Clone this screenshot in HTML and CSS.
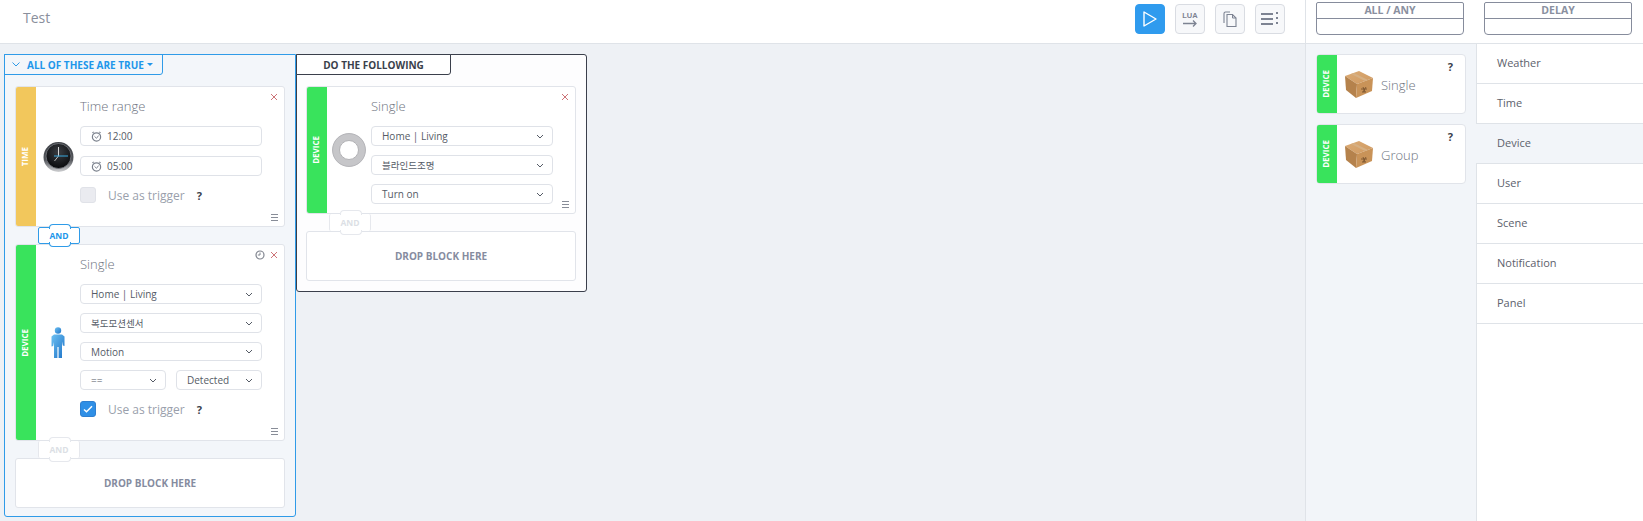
FILE: index.html
```html
<!DOCTYPE html>
<html lang="en">
<head>
<meta charset="UTF-8">
<title>Test</title>
<link rel="stylesheet" href="styles.css">
</head>
<body>

<!-- shared icons -->
<svg class="defs" width="0" height="0">
    <defs>
        <linearGradient id="personFill" x1="0" y1="0" x2="1" y2="1">
            <stop offset="0" stop-color="#6cc0f2"/>
            <stop offset="1" stop-color="#1f74c8"/>
        </linearGradient>
        <linearGradient id="boxTop" x1="0" y1="0" x2="1" y2="1">
            <stop offset="0" stop-color="#dcab74"/>
            <stop offset="1" stop-color="#cf9a62"/>
        </linearGradient>
        <radialGradient id="clockFace" cx="0.5" cy="0.35" r="0.7">
            <stop offset="0" stop-color="#3a3d42"/>
            <stop offset="1" stop-color="#050608"/>
        </radialGradient>
        <linearGradient id="clockRim" x1="0" y1="0" x2="0" y2="1">
            <stop offset="0" stop-color="#3c3f44"/>
            <stop offset="0.6" stop-color="#55585d"/>
            <stop offset="1" stop-color="#d2d3d5"/>
        </linearGradient>
    </defs>
    <symbol id="chev" viewBox="0 0 8 5"><path d="M1 1l3 3 3-3" fill="none" stroke="#555b66" stroke-width="1"/></symbol>
    <symbol id="alarm" viewBox="0 0 12 12">
        <circle cx="6" cy="6.500" r="4.500" fill="none" stroke="#7a808c" stroke-width="1.300"/>
        <path d="M3.800 5.800L6 8l2.200-3" fill="none" stroke="#7a808c" stroke-width="1"/>
        <path d="M1.500 2l1.500-1M10.500 2L9 1" stroke="#7a808c" stroke-width="1.200"/>
    </symbol>
    <symbol id="history" viewBox="0 0 10 10">
        <circle cx="5" cy="5" r="4" fill="none" stroke="#80858f" stroke-width="1.200"/>
        <path d="M5 2.500V5H2.800" fill="none" stroke="#80858f" stroke-width="1"/>
    </symbol>
    <symbol id="close" viewBox="0 0 8 8"><path d="M1 1l6 6M7 1l-6 6" stroke="#cd7478" stroke-width="1"/></symbol>
    <symbol id="lines" viewBox="0 0 7 7"><path d="M0 .5h7M0 3.500h7M0 6.500h7" stroke="#7a808c" stroke-width=".9"/></symbol>
    <symbol id="box" viewBox="0 0 28 27">
        <path d="M0 5L14 0l14 7-16 6z" fill="url(#boxTop)"/>
        <path d="M0 5l12 8-1 14-10-8z" fill="#b5824c"/>
        <path d="M12 13l16-6-1 13-16 7z" fill="#c99358"/>
        <path d="M6 3l14 7 3-1L9 2z" fill="#d6b083"/>
        <path d="M16 18h6M18 16l2 5M21 16l-3 5M17 21h4" stroke="#7a5530" stroke-width=".9" fill="none"/>
    </symbol>
</svg>

<header class="topbar">
    <div class="page-title">Test</div>
    <div class="tools">
        <button class="tool tool-on">
            <svg width="16" height="18" viewBox="0 0 16 18"><path d="M2 2l12 7-12 7z" fill="none" stroke="#fff" stroke-width="1.400" stroke-linejoin="round"/></svg>
        </button>
        <button class="tool">
            <span class="lua">LUA</span>
            <svg width="14" height="7" viewBox="0 0 14 7"><path d="M0 3.500h13M10 .5l3 3-3 3" fill="none" stroke="#7d8392" stroke-width="1.300"/></svg>
        </button>
        <button class="tool">
            <svg width="16" height="18" viewBox="0 0 16 18"><path d="M2 13V3.500A1.500 1.500 0 0 1 3.500 2H8" fill="none" stroke="#7d8392" stroke-width="1.100"/><path d="M5 4.500h5.500l3.500 3.500v8.500H5z" fill="none" stroke="#7d8392" stroke-width="1.100"/><path d="M10.500 4.500V8H14" fill="none" stroke="#7d8392" stroke-width="1"/></svg>
        </button>
        <button class="tool">
            <svg width="18" height="14" viewBox="0 0 18 14"><path d="M0 2h12M0 7h12M0 12h12" stroke="#7d8392" stroke-width="1.800"/><path d="M15 1h2M15 6h2M15 11h2" stroke="#7d8392" stroke-width="2"/></svg>
        </button>
    </div>
    <div class="drag-heads">
        <div class="drag-head"><div class="drag-name">ALL / ANY</div><div class="drag-slot"></div></div>
        <div class="drag-head"><div class="drag-name">DELAY</div><div class="drag-slot"></div></div>
    </div>
</header>

<div class="workspace">
    <main class="canvas">

        <!-- conditions -->
        <section class="group group-if">
            <div class="group-head">
                <svg class="head-chev" width="8" height="5" viewBox="0 0 8 5"><path d="M.5.5L4 4 7.500.5" fill="none" stroke="#2f9be8" stroke-width="1"/></svg>
                ALL OF THESE ARE TRUE<span class="caret"></span>
            </div>
            <div class="group-body">
                <div class="card card-tall">
                    <div class="strip strip-time"><span>TIME</span></div>
                    <div class="card-icon">
                        <svg width="31" height="32" viewBox="0 0 31 32">
                            <circle cx="15.500" cy="16" r="15" fill="url(#clockRim)"/>
                            <circle cx="15.500" cy="15" r="12.500" fill="url(#clockFace)" stroke="#777a80" stroke-width=".8"/>
                            <path d="M15.500 15V6" stroke="#fff" stroke-width=".8"/>
                            <path d="M15.500 15l-4 5" stroke="#ddd" stroke-width=".8"/>
                            <path d="M11 15h14" stroke="#38a8de" stroke-width="1"/>
                        </svg>
                    </div>
                    <div class="card-main">
                        <div class="card-title">Time range</div>
                        <div class="field field-time"><svg width="11" height="11"><use href="#alarm"/></svg>12:00</div>
                        <div class="field field-time"><svg width="11" height="11"><use href="#alarm"/></svg>05:00</div>
                        <div class="trigger">
                            <span class="check"></span>
                            <span class="trigger-text">Use as trigger</span>
                            <span class="help">?</span>
                        </div>
                    </div>
                    <svg class="card-close" width="8" height="8"><use href="#close"/></svg>
                    <svg class="card-menu" width="7" height="7"><use href="#lines"/></svg>
                </div>

                <div class="joint"><span>AND</span></div>

                <div class="card card-tall">
                    <div class="strip strip-device"><span>DEVICE</span></div>
                    <div class="card-icon">
                        <svg width="14" height="31" viewBox="0 0 14 31">
                            <circle cx="7" cy="3.500" r="3.200" fill="url(#personFill)"/>
                            <path d="M3 7.500h8l2.500 2v9.500l-1.700-.5-.8-4V31H7.600V20H6.400v11H3V15l-.8 4-1.700.5v-10z" fill="url(#personFill)"/>
                        </svg>
                    </div>
                    <div class="card-main card-main-tight">
                        <div class="card-title">Single</div>
                        <div class="field">Home | Living<svg class="chev" width="8" height="5"><use href="#chev"/></svg></div>
                        <div class="field field-cjk">복도모션센서<svg class="chev" width="8" height="5"><use href="#chev"/></svg></div>
                        <div class="field field-short">Motion<svg class="chev" width="8" height="5"><use href="#chev"/></svg></div>
                        <div class="field-row">
                            <div class="field">==<svg class="chev" width="8" height="5"><use href="#chev"/></svg></div>
                            <div class="field">Detected<svg class="chev" width="8" height="5"><use href="#chev"/></svg></div>
                        </div>
                        <div class="trigger">
                            <span class="check check-on">
                                <svg width="10" height="8" viewBox="0 0 10 8"><path d="M1 4.500l2.500 2.200L9 1.200" fill="none" stroke="#fff" stroke-width="1.500"/></svg>
                            </span>
                            <span class="trigger-text">Use as trigger</span>
                            <span class="help">?</span>
                        </div>
                    </div>
                    <svg class="card-history" width="10" height="10"><use href="#history"/></svg>
                    <svg class="card-close" width="8" height="8"><use href="#close"/></svg>
                    <svg class="card-menu" width="7" height="7"><use href="#lines"/></svg>
                </div>

                <div class="joint joint-ghost"><span>AND</span></div>
                <div class="drop">DROP BLOCK HERE</div>
            </div>
        </section>

        <!-- actions -->
        <section class="group group-then">
            <div class="group-head">DO THE FOLLOWING</div>
            <div class="group-body">
                <div class="card">
                    <div class="strip strip-device"><span>DEVICE</span></div>
                    <div class="card-icon">
                        <svg width="34" height="34" viewBox="0 0 34 34">
                            <circle cx="17" cy="17" r="16.500" fill="#c6c6c9" stroke="#aaaaae" stroke-width=".8"/>
                            <circle cx="17" cy="17" r="9.500" fill="#fff" stroke="#b2b2b5"/>
                        </svg>
                    </div>
                    <div class="card-main card-main-tight card-main-short">
                        <div class="card-title">Single</div>
                        <div class="field">Home | Living<svg class="chev" width="8" height="5"><use href="#chev"/></svg></div>
                        <div class="field field-cjk">블라인드조명<svg class="chev" width="8" height="5"><use href="#chev"/></svg></div>
                        <div class="field">Turn on<svg class="chev" width="8" height="5"><use href="#chev"/></svg></div>
                    </div>
                    <svg class="card-close" width="8" height="8"><use href="#close"/></svg>
                    <svg class="card-menu" width="7" height="7"><use href="#lines"/></svg>
                </div>
                <div class="joint joint-ghost"><span>AND</span></div>
                <div class="drop">DROP BLOCK HERE</div>
            </div>
        </section>
    </main>

    <aside class="palette">
        <div class="block">
            <div class="strip strip-device"><span>DEVICE</span></div>
            <svg class="block-icon" width="28" height="27"><use href="#box"/></svg>
            <span class="card-title">Single</span>
            <span class="help block-help">?</span>
        </div>
        <div class="block">
            <div class="strip strip-device"><span>DEVICE</span></div>
            <svg class="block-icon" width="28" height="27"><use href="#box"/></svg>
            <span class="card-title">Group</span>
            <span class="help block-help">?</span>
        </div>
    </aside>

    <nav class="cats">
        <div class="cat">Weather</div>
        <div class="cat">Time</div>
        <div class="cat cat-active">Device</div>
        <div class="cat">User</div>
        <div class="cat">Scene</div>
        <div class="cat">Notification</div>
        <div class="cat">Panel</div>
    </nav>
</div>

</body>
</html>
```

FILE: styles.css
```css
* {
    box-sizing: border-box;
}

html, body {
    height: 100%;
}

body {
    margin: 0;
    display: flex;
    flex-direction: column;
    overflow: hidden;
    font-family: "Open Sans", "Noto Sans CJK KR", sans-serif;
    color: #555b66;
    background: #eef1f5;
}

/* kept in the page (not display:none) so the gradients still resolve */
.defs {
    position: absolute;
    width: 0;
    height: 0;
}

/* Top bar */
.topbar {
    display: flex;
    height: 44px;
    flex: none;
    background: #fff;
    border-bottom: 1px solid #dfe3e8;
}

.page-title {
    flex: 1;
    padding: 8px 0 0 23px;
    font-size: 14px;
    line-height: 20px;
    color: #8a8f9c;
}

.tools {
    display: flex;
    gap: 10px;
    padding-top: 4px;
    margin-right: 20px;
}

.tool {
    width: 30px;
    height: 30px;
    padding: 0;
    display: flex;
    flex-direction: column;
    align-items: center;
    justify-content: center;
    background: #f7f8fa;
    border: 1px solid #d9dce2;
    border-radius: 4px;
}

.tool-on {
    background: #2f9bee;
    border-color: #2f9bee;
}

.lua {
    font-size: 7.500px;
    font-weight: 700;
    line-height: 9px;
    color: #7d8392;
}

.drag-heads {
    width: 338px;
    display: flex;
    gap: 20px;
    padding: 2px 0 0 10px;
    border-left: 1px solid #dfe3e8;
}

.drag-head {
    width: 148px;
    height: 33px;
    border: 1px solid #868c9c;
    border-radius: 2px 2px 4px 4px;
}

.drag-name {
    height: 16px;
    border-bottom: 1px solid #868c9c;
    font-size: 10.500px;
    font-weight: 700;
    line-height: 15px;
    text-align: center;
    color: #8a90a0;
}

/* Main areas */
.workspace {
    flex: 1;
    display: flex;
    min-height: 0;
}

.canvas {
    width: 1305px;
    display: flex;
    align-items: flex-start;
    padding: 10px 0 0 4px;
}

.palette {
    width: 171px;
    padding: 10px 10px 0 10px;
    background: #f2f5f9;
    border-left: 1px solid #dfe3e8;
}

.cats {
    flex: 1;
    background: #fff;
    border-left: 1px solid #dfe3e8;
}

/* Groups */
.group {
    border: 1px solid #2f9be8;
    border-radius: 0 0 3px 3px;
    background: #f3f6fa;
}

.group-if {
    width: 292px;
    height: 463px;
}

.group-then {
    width: 291px;
    height: 238px;
    background: #fdfdfe;
    border-color: #3a3f4b;
    border-radius: 0 3px 3px 3px;
}

.group-head {
    width: 159px;
    height: 21px;
    margin: -1px 0 0 -1px;
    padding-left: 7px;
    display: flex;
    align-items: center;
    border: 1px solid #2f9be8;
    border-radius: 0 0 3px 0;
    font-size: 10px;
    font-weight: 700;
    color: #2196ea;
}

.group-then .group-head {
    width: 155px;
    padding-left: 0;
    justify-content: center;
    background: #fff;
    border-color: #3a3f4b;
    color: #3a3f4b;
}

.head-chev {
    margin-right: 7px;
}

.caret {
    margin-left: 3px;
    border: 3px solid transparent;
    border-top-color: #2196ea;
    border-bottom: 0;
}

.group-body {
    padding: 11px 10px 0;
}

.group-then .group-body {
    padding-left: 9px;
}

/* Blocks */
.card {
    position: relative;
    display: flex;
    background: #fff;
    border: 1px solid #e1e4ea;
    border-radius: 3px;
}

.strip {
    width: 20px;
    flex: none;
    display: flex;
    align-items: center;
    justify-content: center;
    padding-right: 4px;
    border-radius: 2px 0 0 2px;
}

.strip span {
    writing-mode: vertical-rl;
    transform: rotate(180deg);
    font-size: 8px;
    font-weight: 700;
    color: #fff;
}

.strip-time {
    background: #f2c75c;
}

.strip-device {
    background: #39e35c;
}

.card-icon {
    width: 44px;
    flex: none;
    display: flex;
    align-items: center;
    justify-content: center;
}

.card-main {
    width: 182px;
    display: flex;
    flex-direction: column;
    gap: 10px;
    padding: 10px 0 23px;
}

.card-main-tight {
    gap: 9px;
}

.card-main-short {
    padding-bottom: 9px;
}

.card-title {
    height: 19px;
    font-size: 13px;
    font-weight: 300;
    line-height: 18px;
    color: #6e7380;
}

.card-main-tight .card-title {
    margin-bottom: 1px;
}

.field {
    height: 20px;
    display: flex;
    align-items: center;
    justify-content: space-between;
    padding: 0 8px 0 10px;
    background: #fff;
    border: 1px solid #dfe2e8;
    border-radius: 4px;
    font-size: 10px;
    color: #555b66;
}

.field-short {
    height: 19px;
}

.field-cjk {
    font-size: 9.500px;
}

.field-time {
    justify-content: flex-start;
    gap: 5px;
}

.field-row {
    display: flex;
    gap: 10px;
}

.field-row .field {
    flex: 1;
}

.trigger {
    display: flex;
    align-items: center;
    height: 16px;
    margin-top: 1px;
}

.card-main-tight .trigger {
    margin-top: 2px;
}

.check {
    width: 16px;
    height: 16px;
    display: flex;
    align-items: center;
    justify-content: center;
    background: #eaebf0;
    border: 1px solid #e0e2e8;
    border-radius: 3px;
}

.check-on {
    background: #2f8fe6;
    border-color: #2f7fd0;
}

.trigger-text {
    margin-left: 12px;
    font-size: 12px;
    color: #9a9fac;
}

.help {
    font-size: 11px;
    font-weight: 700;
    color: #3a3f4b;
}

.trigger .help {
    margin-left: 12px;
}

.card-close {
    position: absolute;
    top: 6px;
    right: 6px;
}

.card-history {
    position: absolute;
    top: 5px;
    right: 19px;
}

.card-menu {
    position: absolute;
    right: 6px;
    bottom: 5px;
}

/* AND connector between blocks */
.joint {
    position: relative;
    width: 42px;
    height: 17px;
    margin-left: 23px;
    display: flex;
    align-items: center;
    justify-content: center;
    background: #fff;
    border: 1px solid #2f9be8;
    border-radius: 2px;
    font-size: 8.500px;
    font-weight: 700;
    color: #2196ea;
}

.joint::before,
.joint::after {
    content: "";
    position: absolute;
    left: 10px;
    width: 20px;
    height: 4px;
    background: #fff;
    border: 1px solid #2f9be8;
}

.joint::before {
    top: -4px;
    border-bottom: 0;
    border-radius: 4px 4px 0 0;
}

.joint::after {
    bottom: -4px;
    border-top: 0;
    border-radius: 0 0 4px 4px;
    z-index: 1;
}

.joint span {
    position: relative;
    z-index: 2;
}

.joint-ghost {
    color: #dcdfe5;
    border-color: #e6e8ed;
    border-top: 0;
    border-bottom: 0;
}

.joint-ghost::before,
.joint-ghost::after {
    border-color: #e6e8ed;
}

.drop {
    height: 50px;
    display: flex;
    align-items: center;
    justify-content: center;
    background: #fff;
    border: 1px solid #e1e4ea;
    border-radius: 3px;
    font-size: 10px;
    font-weight: 700;
    color: #868c9f;
}

/* Palette blocks */
.block {
    position: relative;
    display: flex;
    align-items: center;
    height: 60px;
    margin-bottom: 10px;
    background: #fff;
    border: 1px solid #e1e4ea;
    border-radius: 4px;
}

.block .strip {
    align-self: stretch;
}

.block-icon {
    margin: 0 8px;
}

.block .card-title {
    height: auto;
    margin: 2px 0 0;
}

.block-help {
    position: absolute;
    top: 4px;
    right: 12px;
}

/* Category list */
.cat {
    height: 40px;
    display: flex;
    align-items: center;
    padding: 0 0 2px 20px;
    background: #fff;
    border-bottom: 1px solid #dfe3e8;
    font-size: 11px;
    color: #5c616c;
}

.cat-active {
    margin-left: -1px;
    padding-left: 21px;
    background: #f2f5f9;
}
```
